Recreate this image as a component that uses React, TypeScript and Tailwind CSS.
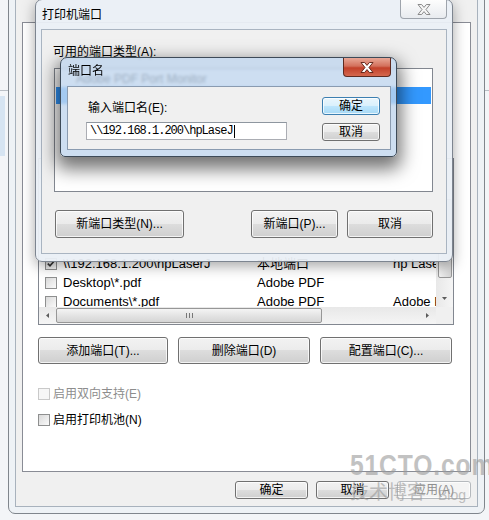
import React from "react";

const font = "font-['Liberation_Sans','Noto_Sans_CJK_SC',sans-serif]";

type BtnProps = { children: React.ReactNode; className?: string; kind?: "normal" | "default" | "disabled" };

const Btn = ({ children, className = "", kind = "normal" }: BtnProps) => {
  const look =
    kind === "default"
      ? "border-[#3c7fb1] bg-[linear-gradient(#eaf6fd,#d9f0fc_50%,#bee6fd_50%,#a7d9f5)] text-black"
      : kind === "disabled"
        ? "border-[#b5b9bd] bg-[#f4f4f4] text-[#8f8f8f]"
        : "border-[#707070] bg-[linear-gradient(#f2f2f2,#ebebeb_50%,#dddddd_50%,#cfcfcf)] text-black";
  return (
    <div
      className={`flex items-center justify-center rounded-[3px] border text-[12px] leading-none shadow-[inset_0_0_0_1px_rgba(255,255,255,0.75)] ${look} ${className}`}
    >
      {children}
    </div>
  );
};

const Check = ({ checked = false, disabled = false }: { checked?: boolean; disabled?: boolean }) => (
  <span
    className={`flex h-[12px] w-[12px] shrink-0 items-center justify-center border ${
      disabled ? "border-[#c9c9c9] bg-[#f6f6f6]" : "border-[#8e8f8f] bg-[linear-gradient(135deg,#d9d9d9,#fafafa)]"
    }`}
  >
    {checked && (
      <svg width="8" height="7" viewBox="0 0 8 7">
        <path d="M0.8 3.6 L3 5.8 L7.2 0.9" fill="none" stroke="#333" strokeWidth="1.6" />
      </svg>
    )}
  </span>
);

const CloseX = ({ active = false }: { active?: boolean }) => (
  <svg width="14" height="11" viewBox="0 0 14 11">
    <polygon
      points="1,0.5 4.6,0.5 7,3.4 9.4,0.5 13,0.5 9,5.5 13,10.5 9.4,10.5 7,7.6 4.6,10.5 1,10.5 5,5.5"
      fill={active ? "#ffffff" : "#f6f6f6"}
      stroke={active ? "#5a1c10" : "#7f7f7f"}
      strokeWidth="0.9"
      strokeLinejoin="round"
    />
  </svg>
);

const Arrow = ({ dir }: { dir: "up" | "down" | "left" | "right" }) => {
  const vertical = dir === "up" || dir === "down";
  const pts = { up: "0,3 2.5,0 5,3", down: "0,0 5,0 2.5,3", left: "3,0 3,5 0,2.5", right: "0,0 0,5 3,2.5" }[dir];
  return (
    <svg width={vertical ? 5 : 3} height={vertical ? 3 : 5} viewBox={vertical ? "0 0 5 3" : "0 0 3 5"}>
      <polygon points={pts} fill="#5c5c5c" />
    </svg>
  );
};

const ports = [
  { name: "LPT1:", kind: "打印机端口", printer: "" },
  { name: "COM1:", kind: "串行端口", printer: "" },
  { name: "FILE:", kind: "打印到文件", printer: "" },
  { name: "XPSPort:", kind: "本地端口", printer: "Microsoft XPS" },
  { name: "\\\\192.168.1.200\\hpLaserJ", kind: "本地端口", printer: "hp LaserJet P1007", checked: true },
  { name: "Desktop\\*.pdf", kind: "Adobe PDF", printer: "" },
  { name: "Documents\\*.pdf", kind: "Adobe PDF", printer: "Adobe PDF" },
];

const PortList = () => (
  <div className="flex h-[167px] flex-col border border-[#828790] bg-white">
    <div className="flex min-h-0 flex-1">
      <div className="flex min-w-0 flex-1 flex-col overflow-hidden text-[13px]">
        <div className="flex h-[19px] shrink-0 items-center border-b border-[#e5e5e5] text-[12px] text-[#4c607a]">
          <span className="w-[218px] shrink-0 pl-[6px]">端口</span>
          <span className="w-[136px] shrink-0">描述</span>
          <span className="shrink-0">打印机</span>
        </div>
        {ports.map((p) => (
          <div key={p.name} className="flex h-[19px] shrink-0 items-center whitespace-nowrap text-black">
            <div className="flex w-[218px] shrink-0 items-center gap-[6px] pl-[6px]">
              <Check checked={p.checked} />
              <span>{p.name}</span>
            </div>
            <span className="w-[136px] shrink-0">{p.kind}</span>
            <span className="shrink-0">{p.printer}</span>
          </div>
        ))}
      </div>
      <div className="flex w-[17px] shrink-0 flex-col items-center bg-[linear-gradient(90deg,#e8e8e8,#f5f5f5)]">
        <div className="flex h-[17px] items-center justify-center">
          <Arrow dir="up" />
        </div>
        <div className="mt-[23px] h-[79px] w-[14px] rounded-[2px] border border-[#979797] bg-[linear-gradient(90deg,#f4f4f4,#e4e4e4_50%,#d5d5d5)]" />
        <div className="flex-1" />
        <div className="flex h-[17px] items-center justify-center">
          <Arrow dir="down" />
        </div>
      </div>
    </div>
    <div className="flex h-[17px] shrink-0 items-center bg-[linear-gradient(#e8e8e8,#f5f5f5)]">
      <div className="flex w-[17px] justify-center">
        <Arrow dir="left" />
      </div>
      <div className="flex h-[15px] w-[266px] items-center justify-center rounded-[2px] border border-[#979797] bg-[linear-gradient(#f4f4f4,#e4e4e4_50%,#d5d5d5)]">
        <svg width="7" height="5" viewBox="0 0 7 5">
          <path d="M0.5 0v5M3.5 0v5M6.5 0v5" stroke="#777" strokeWidth="1" />
        </svg>
      </div>
      <div className="flex-1" />
      <div className="flex w-[17px] justify-center">
        <Arrow dir="right" />
      </div>
      <div className="h-full w-[17px] bg-[#f0f0f0]" />
    </div>
  </div>
);

export default function App() {
  return (
    <div className={`relative h-[520px] w-[489px] overflow-hidden bg-[#f3f5f8] ${font}`}>
      {/* windows behind */}
      <div className="absolute left-0 top-[96px] h-[60px] w-[5px] bg-[#d6e4f2]" />
      <div className="absolute left-0 top-[90px] h-px w-[8px] bg-[#b9bec5]" />
      <div className="absolute right-0 top-[90px] h-px w-[4px] bg-[#b9bec5]" />

      {/* 打印机属性 - 端口 */}
      <div className="absolute left-[8px] top-[-40px] flex h-[554px] w-[477px] flex-col rounded-b-[7px] border border-[#80868d] bg-[#eef2f6] px-[6px] pb-[6px] pt-[32px]">
        <div className="flex flex-1 flex-col border border-[#a8b2bd] bg-[#f0f0f0] px-[6px] pb-[7px] pt-[28px]">
          <div className="flex flex-1 flex-col justify-end border border-[#898c95] bg-white pb-[43px] pl-[15px] pr-[16px]">
            <PortList />
            <div className="mt-[12px] flex h-[27px] gap-[10px]">
              <Btn className="w-[130px]">添加端口(T)...</Btn>
              <Btn className="w-[132px]">删除端口(D)</Btn>
              <Btn className="w-[132px]">配置端口(C)...</Btn>
            </div>
            <div className="mt-[22px] flex h-[16px] items-center gap-[3px] text-[12px] text-[#8d8d8d]">
              <Check disabled />
              <span>启用双向支持(E)</span>
            </div>
            <div className="mt-[10px] flex h-[16px] items-center gap-[3px] text-[12px] text-black">
              <Check />
              <span>启用打印机池(N)</span>
            </div>
          </div>
          <div className="mt-[9px] flex justify-end gap-[8px]">
            <Btn className="h-[18px] w-[73px]">确定</Btn>
            <Btn className="h-[18px] w-[73px]">取消</Btn>
            <Btn kind="disabled" className="h-[18px] w-[74px]">
              应用(A)
            </Btn>
          </div>
        </div>
      </div>

      {/* 打印机端口 */}
      <div className="absolute left-[35px] top-[-1px] flex h-[263px] w-[418px] flex-col rounded-[7px] border border-[#7d8590] bg-[rgba(234,239,245,0.95)] px-[5px] pb-[7px] shadow-[0_4px_14px_rgba(0,0,0,0.35)]">
        <div className="flex h-[29px] shrink-0 items-start justify-between">
          <span className="ml-[1px] mt-[7px] text-[12px] leading-[16px] text-black">打印机端口</span>
          <div className="flex h-[19px] w-[47px] items-center justify-center rounded-b-[4px] border border-t-0 border-[#9ea4ac] bg-[linear-gradient(#fdfdfd,#e8ebef)]">
            <CloseX />
          </div>
        </div>
        <div className="flex flex-1 flex-col border border-[#a9b4c1] bg-[#f0f0f0]">
          <span className="ml-[11px] mt-[14px] text-[12px] leading-[16px] text-black">可用的端口类型(A):</span>
          <div className="ml-[12px] mr-[13px] mt-[8px] flex h-[124px] flex-col border border-[#828790] bg-white p-[1px] text-[12px]">
            <div className="flex h-[17px] items-center pl-[20px]">Adobe PDF Port Monitor</div>
            <div className="flex h-[17px] items-center bg-[#3399ff] pl-[20px] text-white">Local Port</div>
            <div className="flex h-[17px] items-center pl-[20px]">Standard TCP/IP Port</div>
          </div>
          <div className="mx-[13px] mt-[18px] flex h-[28px]">
            <Btn className="w-[129px]">新端口类型(N)...</Btn>
            <div className="flex-1" />
            <Btn className="w-[87px]">新端口(P)...</Btn>
            <Btn className="ml-[9px] w-[86px]">取消</Btn>
          </div>
        </div>
      </div>

      {/* 端口名 */}
      <div className="absolute left-[60px] top-[57px] flex h-[100px] w-[337px] flex-col rounded-b-[5px] rounded-t-[7px] border border-[#3d4a58] bg-[rgba(193,214,237,0.8)] pb-[6px] pl-[6px] pr-[5px] shadow-[0_8px_18px_4px_rgba(0,0,0,0.55)] backdrop-blur-[1.5px]">
        <div className="flex h-[28px] shrink-0 items-start justify-between">
          <span className="ml-[1px] mt-[5px] text-[12px] leading-[16px] text-black">端口名</span>
          <div className="flex h-[19px] w-[48px] items-center justify-center rounded-b-[4px] border border-t-0 border-[#5e2a20] bg-[linear-gradient(#e9a897,#d3705c_45%,#c2402a_55%,#d4684e)]">
            <CloseX active />
          </div>
        </div>
        <div className="flex flex-1 justify-between border border-[#8a9bb0] bg-[#f0f0f0]">
          <div className="flex flex-col pl-[18px] pt-[13px]">
            <span className="ml-[2px] text-[12px] leading-[16px] text-black">输入端口名(E):</span>
            <div className="mt-[6px] flex h-[18px] w-[201px] items-center border border-[#abadb3] border-t-[#8e969f] bg-white pl-[3px]">
              <span className="font-['Liberation_Mono',monospace] text-[12px] leading-none tracking-[-1px] text-black">
                {"\\\\192.168.1.200\\hpLaseJ"}
              </span>
              <span className="ml-[1px] h-[13px] w-px bg-black" />
            </div>
          </div>
          <div className="flex flex-col gap-[8px] pr-[10px] pt-[10px]">
            <Btn kind="default" className="h-[18px] w-[58px]">
              确定
            </Btn>
            <Btn className="h-[18px] w-[58px]">取消</Btn>
          </div>
        </div>
      </div>

      {/* watermark */}
      <div className="pointer-events-none absolute left-[350px] top-[450px] flex flex-col items-start text-[#9a9a9a] opacity-60">
        <span className="origin-left scale-x-[0.85] text-[29px] font-bold leading-[30px] tracking-[1px]">51CTO.com</span>
        <div className="mt-[2px] flex items-end gap-[12px]">
          <span className="text-[19px] leading-[22px]">技术博客</span>
          <span className="text-[14px] leading-[18px]">Blog</span>
        </div>
      </div>
    </div>
  );
}
